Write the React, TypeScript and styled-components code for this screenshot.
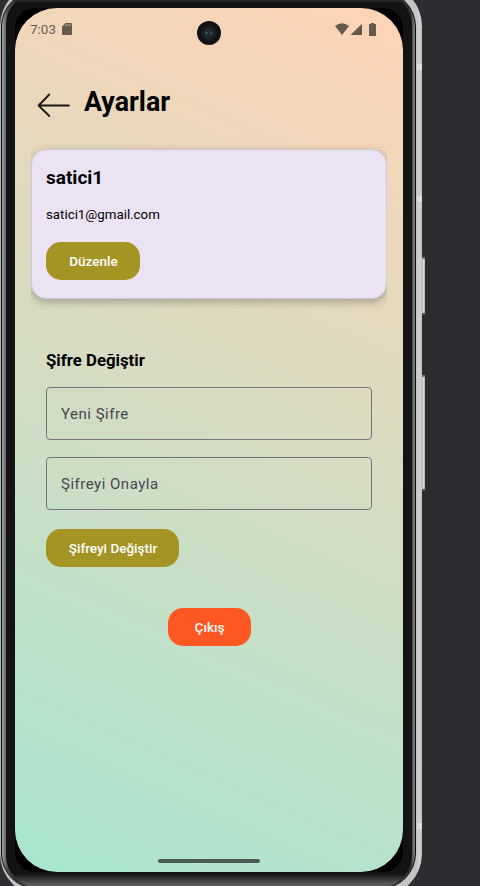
import React from "react";
import styled, { createGlobalStyle } from "styled-components";

const Global = createGlobalStyle`
  * { box-sizing: border-box; }
  html, body { margin: 0; padding: 0; background: #2c2d31; }
  body { width: 480px; height: 886px; overflow: hidden; font-family: Roboto, sans-serif; color: #000; }
`;

const Desk = styled.div`
  width: 480px;
  height: 886px;
  overflow: hidden;
  background: #2c2d31;
  display: flex;
  align-items: flex-start;
  position: relative;
`;

const MetalFrame = styled.div`
  flex: none;
  width: 422px;
  height: 912px;
  margin-top: -16px;
  padding: 7px 6px 7px 1px;
  border-radius: 42px;
  background: linear-gradient(90deg, #b5b8b8 0, #c4c4c4 4%, #c4c4c4 98.6%, #d0d0d0 99.4%, #c2c2c2 100%);
`;

const InnerRim = styled.div`
  height: 100%;
  padding: 1px 3px 1px 4px;
  border-radius: 36px;
  border-left: 1px solid #0c0c0c;
  border-right: 1px solid #0c0c0c;
  background: linear-gradient(90deg, #a4a8a9, #4c4e4f 1.2%, #333 3%, #333 99%, #888);
`;

const Bezel = styled.div`
  height: 100%;
  padding: 16px 9px 0;
  border-radius: 33px;
  background: linear-gradient(#5a5a5a 3px, #131313 11px, #131313 calc(100% - 14px), #5a5a5a calc(100% - 4px));
`;

const Glass = styled.div`
  width: 388px;
  height: 864px;
  border-radius: 20px;
  background: #000;
`;

const Screen = styled.main`
  width: 388px;
  height: 864px;
  border-radius: 42px;
  overflow: hidden;
  position: relative;
  display: flex;
  flex-direction: column;
  background: linear-gradient(24.2deg, #a8e6cf, #ffd3b6);
`;

const SideKey = styled.div<{ $top: number; $height: number }>`
  position: absolute;
  left: 422px;
  top: ${(p) => p.$top}px;
  width: 3px;
  height: ${(p) => p.$height}px;
  background: linear-gradient(90deg, #aaa, #e8e8e4 60%, #999);
  border-top: 2px solid #777;
  border-bottom: 2px solid #555;
`;

const Antenna = styled.div<{ $top: number }>`
  position: absolute;
  left: 417px;
  top: ${(p) => p.$top}px;
  width: 5px;
  height: 6px;
  background: #dedede;
`;

const StatusBar = styled.header`
  height: 43px;
  padding: 0 26px 1px 15px;
  display: flex;
  align-items: center;
  color: #6b6053;
  font-size: 13.5px;
`;

const Clock = styled.span`
  width: 32px;
`;

const Signals = styled.div`
  margin-left: auto;
  display: flex;
`;

const Camera = styled.div`
  position: absolute;
  left: 182px;
  top: 13px;
  width: 24px;
  height: 24px;
`;

const TitleBar = styled.div`
  height: 98px;
  padding: 4px 22px 0;
  display: flex;
  align-items: center;
  gap: 14px;
`;

const BackArrow = styled.svg`
  margin-top: 5px;
`;

const Title = styled.h1`
  margin: 0;
  font-size: 26.8px;
  font-weight: 700;
  line-height: 32px;
`;

const CardClip = styled.div`
  margin: 0 16px;
  padding-top: 8px;
  margin-top: -8px;
  height: 173px;
  overflow: hidden;
`;

const Card = styled.section`
  height: 150px;
  padding: 16px 14px;
  border: 1px solid #cac9cc;
  border-radius: 15px;
  background: #ebe3f4;
  box-shadow: 0 3px 9px rgba(0, 0, 0, 0.27);
`;

const UserName = styled.h2`
  margin: 0;
  font-size: 19px;
  line-height: 23px;
  font-weight: 700;
`;

const Email = styled.p`
  margin: 16px 0 18px;
  font-size: 13.3px;
  line-height: 19px;
`;

const Button = styled.button<{ $width: number; $tone?: string }>`
  display: block;
  width: ${(p) => p.$width}px;
  height: 38px;
  padding: 0;
  border: 0;
  border-radius: 15px;
  background: ${(p) => p.$tone || "#a49423"};
  color: #fff;
  font: 500 13.5px/38px Roboto, sans-serif;
  text-indent: 1px;
`;

const Form = styled.section`
  padding: 36px 31px 0;
`;

const FormTitle = styled.h3`
  margin: 0 0 17px;
  font-size: 16.8px;
  line-height: 20px;
  font-weight: 700;
`;

const Field = styled.input`
  display: block;
  width: 326px;
  height: 53px;
  margin-bottom: 17px;
  padding: 0 14px;
  border: 1px solid #78747d;
  border-radius: 4px;
  background: transparent;
  font: 400 15px Roboto, sans-serif;
  letter-spacing: 0.5px;
  outline: none;
  &::placeholder { color: #49454f; opacity: 1; }
`;

const FormAction = styled.div`
  padding-top: 2px;
`;

const ExitRow = styled.div`
  margin-top: 41px;
  display: flex;
  justify-content: center;
`;

const HomePill = styled.div`
  width: 102px;
  height: 4px;
  margin: auto auto 9px 143px;
  border-radius: 2px;
  background: #495b52;
`;

export default function App() {
  return (
    <>
      <Global />
      <Desk>
        <MetalFrame>
          <InnerRim>
            <Bezel>
              <Glass>
                <Screen>
                  <StatusBar>
                    <Clock>7:03</Clock>
                    <svg width="10" height="12" viewBox="0 0 10 12">
                      <path d="M3.6 0H9a1 1 0 0 1 1 1v10a1 1 0 0 1-1 1H1a1 1 0 0 1-1-1V3.6Z" fill="#64594c" />
                      <path d="M3.9 1.2v2M5.9 1.2v2M7.900 1.2v2" stroke="#c4b299" strokeWidth="1" />
                    </svg>
                    <Signals>
                      <svg width="42" height="13" viewBox="0 0 42 13" fill="#64594c">
                        <path d="M0 3Q7 -2.6 14 3L7 12Z" />
                        <path d="M27 .8V12H15.500Z" />
                        <path d="M36 0h3v1h1.300q.7 0 .7.7v10.600q0 .7-.7.7h-5.600q-.7 0-.7-.7V1.700q0-.7.7-.7H36Z" />
                      </svg>
                    </Signals>
                  </StatusBar>
                  <Camera>
                    <svg width="24" height="24" viewBox="0 0 24 24">
                      <circle cx="12" cy="12" r="12" fill="#111215" />
                      <circle cx="12" cy="12" r="7.500" fill="#1d1e22" />
                      <circle cx="12" cy="12" r="4.500" fill="#24282f" />
                      <circle cx="9.500" cy="12" r="1.100" fill="#287b7b" />
                      <circle cx="14.300" cy="12" r="1.100" fill="#35599a" />
                    </svg>
                  </Camera>
                  <TitleBar>
                    <BackArrow width="33" height="24" viewBox="0 0 33 24" fill="none" stroke="#1a1815" strokeWidth="1.800" strokeLinecap="round" strokeLinejoin="round">
                      <path d="M12.300 1.500 1.600 12.500 12.300 23M1.600 12.500H32" />
                    </BackArrow>
                    <Title>Ayarlar</Title>
                  </TitleBar>
                  <CardClip>
                    <Card>
                      <UserName>satici1</UserName>
                      <Email>satici1@gmail.com</Email>
                      <Button $width={94}>Düzenle</Button>
                    </Card>
                  </CardClip>
                  <Form>
                    <FormTitle>Şifre Değiştir</FormTitle>
                    <Field placeholder="Yeni Şifre" />
                    <Field placeholder="Şifreyi Onayla" />
                    <FormAction>
                      <Button $width={133}>Şifreyi Değiştir</Button>
                    </FormAction>
                  </Form>
                  <ExitRow>
                    <Button $width={83} $tone="#ff5722">Çıkış</Button>
                  </ExitRow>
                  <HomePill />
                </Screen>
              </Glass>
            </Bezel>
          </InnerRim>
        </MetalFrame>
        <SideKey $top={257} $height={58} />
        <SideKey $top={375} $height={116} />
        <Antenna $top={64} />
        <Antenna $top={196} />
        <Antenna $top={823} />
      </Desk>
    </>
  );
}
